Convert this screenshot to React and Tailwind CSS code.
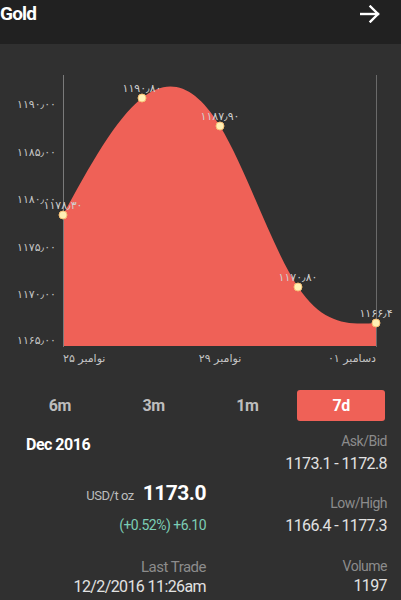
const FA = '"DejaVu Sans", sans-serif';

const yTicks = [
    { y: 108, t: "۱۱۹۰٫۰۰" },
    { y: 156, t: "۱۱۸۵٫۰۰" },
    { y: 203, t: "۱۱۸۰٫۰۰" },
    { y: 251, t: "۱۱۷۵٫۰۰" },
    { y: 298, t: "۱۱۷۰٫۰۰" },
    { y: 344, t: "۱۱۶۵٫۰۰" },
];

const points = [
    { x: 63, y: 215, t: "۱۱۷۸٫۳۰" },
    { x: 142, y: 98, t: "۱۱۹۰٫۸۰" },
    { x: 220, y: 126, t: "۱۱۸۷٫۹۰" },
    { x: 298, y: 287, t: "۱۱۷۰٫۸۰" },
    { x: 376, y: 323, t: "۱۱۶۶٫۴" },
];

const curve =
    "M63,215 C89.3,166.7 115.7,118.5 142,98 C168,77.1 194,83.2 220,126 C246,168.7 272,248.1 298,287 C324,325.9 350,324.5 376,323";

function Chart() {
    return (
        <svg width="401" height="331" viewBox="0 44 401 331" className="block">
            <path d={curve + " L376,346 L63,346 Z"} fill="#ef6157" />
            <line x1="63.5" y1="75" x2="63.5" y2="347" stroke="#7a7a7a" strokeWidth="1" />
            <line x1="376.5" y1="75" x2="376.5" y2="347" stroke="#6a6a6a" strokeWidth="1" />
            {yTicks.map((t) => (
                <text key={t.t} x="56" y={t.y} textAnchor="end" fontSize="11" fill="#c4c4c4" style={{ fontFamily: FA }}>
                    {t.t}
                </text>
            ))}
            {points.map((p) => (
                <g key={p.t}>
                    <text x={p.x} y={p.y - 6} textAnchor="middle" fontSize="11" fill="#cfcfcf" style={{ fontFamily: FA }}>
                        {p.t}
                    </text>
                    <circle cx={p.x} cy={p.y} r="4" fill="#fff0b5" stroke="#f6bf75" strokeWidth="1" />
                </g>
            ))}
            <text x="63" y="362" textAnchor="start" fontSize="11" fill="#c4c4c4" style={{ fontFamily: FA }}>۲۵ نوامبر</text>
            <text x="220" y="362" textAnchor="middle" fontSize="11" fill="#c4c4c4" style={{ fontFamily: FA }}>۲۹ نوامبر</text>
            <text x="376" y="362" textAnchor="end" fontSize="11" fill="#c4c4c4" style={{ fontFamily: FA }}>۰۱ دسامبر</text>
        </svg>
    );
}

export default function App() {
    const tabs = ["6m", "3m", "1m", "7d"];
    return (
        <div className="w-[401px] h-[600px] overflow-hidden bg-[#303030] font-['Roboto',sans-serif] tracking-[-0.5px]">
            <div className="h-[44px] bg-[#212121] flex items-start justify-between pt-[2px] pr-[21px]">
                <span className="text-[19px] font-bold text-white leading-[24px] tracking-[-0.8px]">Gold</span>
                <svg width="20" height="18" viewBox="0 0 20 18" className="mt-[3px]" fill="none" stroke="white" strokeWidth="2.4" strokeLinecap="square">
                    <path d="M1 9 H18" />
                    <path d="M10.5 1.5 L18 9 L10.5 16.5" />
                </svg>
            </div>

            <Chart />

            <div className="mt-[15px] px-[13px] grid grid-cols-4">
                {tabs.map((t) => (
                    <div key={t} className="px-[3px]">
                        <div
                            className={
                                t === "7d"
                                    ? "h-[31px] rounded-[3px] bg-[#ef6157] flex items-center justify-center text-[16px] font-bold text-white"
                                    : "h-[31px] flex items-center justify-center text-[16px] font-bold text-[#bdbdbd]"
                            }
                        >
                            {t}
                        </div>
                    </div>
                ))}
            </div>

            <div className="flex mt-[13px]">
                <div className="w-[206px] flex flex-col items-end">
                    <div className="self-start pl-[26px] text-[16px] font-bold text-white leading-[22px]">Dec 2016</div>
                    <div className="mt-[23px] flex items-baseline gap-[9px]">
                        <span className="text-[13px] text-[#bdbdbd]">USD/t oz</span>
                        <span className="text-[21px] font-bold text-white leading-[28px]">1173.0</span>
                    </div>
                    <div className="mt-[8px] text-[14px] text-[#7ccdb5] leading-[20px]">(+0.52%) +6.10</div>
                    <div className="mt-[22px] text-[15px] text-[#8c8c8c] leading-[20px]">Last Trade</div>
                    <div className="text-[16px] tracking-[-0.6px] text-[#e2e2e2] leading-[20px]">12/2/2016 11:26am</div>
                </div>
                <div className="flex-1 pr-[14px] flex flex-col items-end">
                    <div className="-mt-[3px] text-[14px] text-[#8c8c8c] leading-[20px]">Ask/Bid</div>
                    <div className="mt-[2px] text-[16px] tracking-[-0.6px] text-[#e2e2e2] leading-[22px]">1173.1 - 1172.8</div>
                    <div className="mt-[18px] text-[14px] text-[#8c8c8c] leading-[20px]">Low/High</div>
                    <div className="mt-[2px] text-[16px] tracking-[-0.6px] text-[#e2e2e2] leading-[22px]">1166.4 - 1177.3</div>
                    <div className="mt-[19px] text-[14px] text-[#8c8c8c] leading-[20px]">Volume</div>
                    <div className="text-[16px] tracking-[-0.6px] text-[#e2e2e2] leading-[20px]">1197</div>
                </div>
            </div>
        </div>
    );
}
